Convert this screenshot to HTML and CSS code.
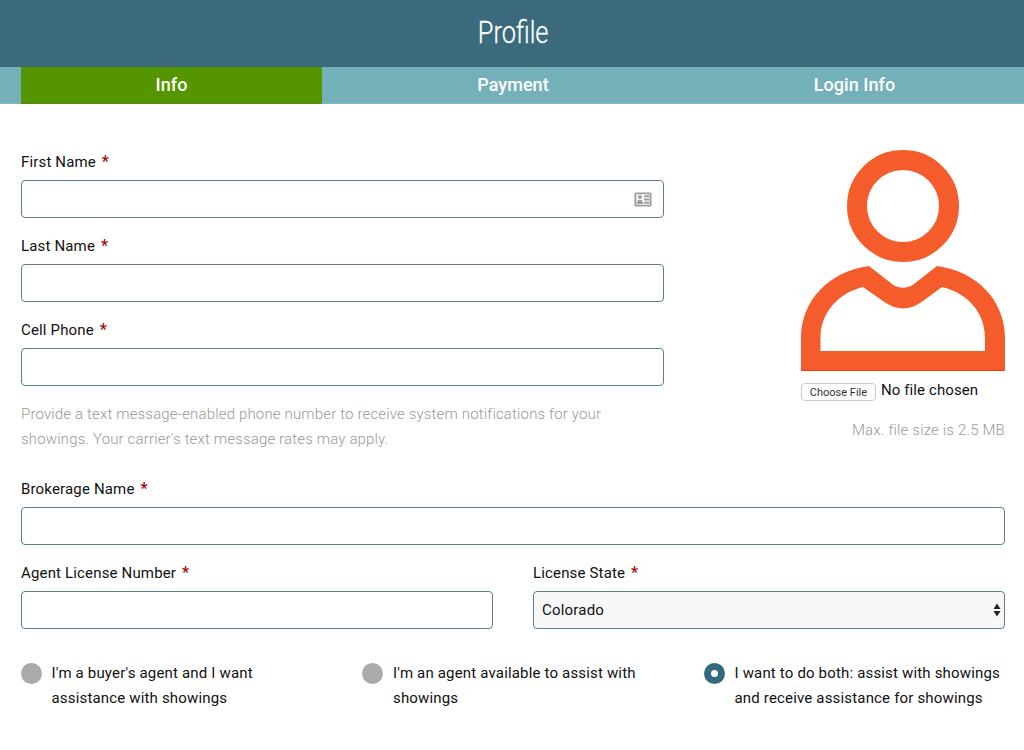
FILE: index.html
```html
<!DOCTYPE html>
<html lang="en">
<head>
<meta charset="utf-8">
<title>Profile</title>
<link rel="stylesheet" href="styles.css">
</head>
<body>
<header class="title-bar"><h1 class="title">Profile</h1></header>
<nav class="tabs">
  <a class="tab tab-active">Info</a>
  <a class="tab">Payment</a>
  <a class="tab">Login Info</a>
</nav>
<main class="form">
  <section class="top">
    <div class="left">
      <div class="field">
        <label class="label">First Name <span class="req">*</span></label>
        <div class="input-wrap">
          <input class="input" type="text">
          <svg class="card-icon" width="18" height="15" viewBox="0 0 18 15"><path fill-rule="evenodd" d="M2 0.5h14a1.5 1.5 0 0 1 1.5 1.5v11a1.5 1.5 0 0 1-1.5 1.5H2A1.5 1.5 0 0 1 .5 13V2A1.5 1.5 0 0 1 2 .5zM2.300 2.300v10.400h13.400V2.300zM6 3a2 2 0 1 0 0 4 2 2 0 0 0 0-4zM3 12h6c0-2.800-.8-4.300-3-4.300s-3 1.500-3 4.300zM10 3.300v2h5.200v-2zM10 6.500v2h5.200v-2zM10 9.700v2h5.200v-2z"/></svg>
        </div>
      </div>
      <div class="field">
        <label class="label">Last Name <span class="req">*</span></label>
        <input class="input" type="text">
      </div>
      <div class="field field-tight">
        <label class="label">Cell Phone <span class="req">*</span></label>
        <input class="input" type="text">
      </div>
      <p class="help">Provide a text message-enabled phone number to receive system notifications for your showings. Your carrier's text message rates may apply.</p>
    </div>
    <aside class="photo">
      <svg class="avatar" width="205" height="222" viewBox="800 150 205 222">
        <circle cx="903" cy="206" r="46" fill="none" stroke="#f45c2c" stroke-width="20"/>
        <path fill="#f45c2c" fill-rule="evenodd" d="M801 371V338C801 300 830 271 869 266L892 284C899 289 907 289 914 284L937 266C976 271 1005 300 1005 338V371ZM820.500 351H985V338C985 313 968 293 942 287L923 301C909 311 897 311 883 301L863 287C838 293 820.500 313 820.500 338Z"/>
        <rect x="801" y="370" width="204" height="1" fill="#f33c10"/>
      </svg>
      <div class="file-row">
        <button class="file-btn" type="button">Choose File</button>
        <span class="file-name">No file chosen</span>
      </div>
      <p class="file-note">Max. file size is 2.5 MB</p>
    </aside>
  </section>
  <div class="field">
    <label class="label">Brokerage Name <span class="req">*</span></label>
    <input class="input" type="text">
  </div>
  <div class="pair">
    <div class="field">
      <label class="label">Agent License Number <span class="req">*</span></label>
      <input class="input" type="text">
    </div>
    <div class="field">
      <label class="label">License State <span class="req">*</span></label>
      <div class="input-wrap">
        <select class="input select"><option>Colorado</option></select>
        <svg class="select-arrows" width="8" height="14" viewBox="0 0 8 14"><path d="M4 .5L7.500 6H.5zM4 13.500L.5 8h7z"/></svg>
      </div>
    </div>
  </div>
  <div class="radios">
    <div class="radio-item"><span class="radio"></span><span class="radio-text">I'm a buyer's agent and I want assistance with showings</span></div>
    <div class="radio-item"><span class="radio"></span><span class="radio-text">I'm an agent available to assist with showings</span></div>
    <div class="radio-item"><span class="radio radio-on"></span><span class="radio-text">I want to do both: assist with showings and receive assistance for showings</span></div>
  </div>
</main>
</body>
</html>
```
FILE: styles.css
```css
* { box-sizing: border-box; }
html, body { margin: 0; padding: 0; background: #fff; }
body { font-family: "Roboto", "Liberation Sans", sans-serif; color: #111; height: 750px; overflow: hidden; }
.title-bar { height: 67px; background: #3a6a7b; border-bottom: 1px solid #38667a; display: flex; align-items: center; justify-content: center; }
.title { margin: 0 0 2px 2px; font-size: 31px; font-weight: 300; color: #fff; transform: scaleX(.82); line-height: 1; -webkit-text-stroke: .3px #fff; }
.tabs { height: 37px; background: #74b0ba; padding: 0 19px 0 21px; display: flex; border-bottom: 1px solid #84bcc6; }
.tab { display: flex; align-items: center; justify-content: center; color: #fff; font-size: 18px; font-weight: 500; padding-bottom: 2px; flex: 0 0 301px; letter-spacing: .05px; }
.tab-active { background: #559600; border-bottom: 1px solid #4c8a10; margin-bottom: -1px; }
.tab:nth-child(2) { flex: 0 0 382px; }
.form { padding: 48px 19px 0 21px; }
.top { display: flex; justify-content: space-between; margin-bottom: 27px; }
.left { width: 643px; }
.field { margin-bottom: 18px; }
.field-tight { margin-bottom: 0; }
.label { display: block; font-size: 15px; line-height: 20px; margin-bottom: 8px; letter-spacing: .16px; }
.req { color: #aa0000; font-size: 16px; font-weight: 500; margin-left: 2px; }
.input { display: block; width: 100%; height: 38px; border: 1px solid #5a8090; border-radius: 4px; background: #fff; font: 15px "Roboto", sans-serif; letter-spacing: .2px; color: #111; padding: 0 8px; outline: none; }
.input-wrap { position: relative; }
.card-icon { position: absolute; right: 12px; top: 12px; fill: #9c9c9c; }
.select { appearance: none; -webkit-appearance: none; background: #f7f7f7; }
.select-arrows { position: absolute; right: 4px; top: 12px; fill: #222; }
.help { margin: 16px 0 0; max-width: 600px; font-size: 15px; font-weight: 300; line-height: 25px; color: #999; height: 50px; letter-spacing: .16px; }
.photo { width: 205px; display: flex; flex-direction: column; margin-top: -2px; }
.avatar { display: block; }
.file-row { display: flex; align-items: center; margin-top: 10px; gap: 5px; height: 20px; padding-left: 1px; }
.file-btn { width: 75px; height: 18px; padding: 0; border: 1px solid #ccc; border-radius: 4px; background: #fff; color: #333; font: 11px "Roboto", sans-serif; }
.file-name { font-size: 15px; letter-spacing: .1px; color: #111; margin-bottom: 4px; }
.file-note { margin: 18px 0 0; font-size: 15px; font-weight: 300; line-height: 20px; letter-spacing: .17px; color: #999; text-align: right; }
.pair { display: grid; grid-template-columns: 472px 472px; column-gap: 40px; }
.radios { display: grid; grid-template-columns: repeat(3, 341.5px); margin: 14px 0 0 -.5px; }
.radio-item { display: flex; gap: 10px; }
.radio { flex: none; width: 21px; height: 21px; border-radius: 50%; background: #aaa; margin-top: 2px; }
.radio-on { background: #fff; border: 7.5px solid #33687d; }
.radio-text { width: 272px; font-size: 15px; line-height: 25px; letter-spacing: .17px; }
```
